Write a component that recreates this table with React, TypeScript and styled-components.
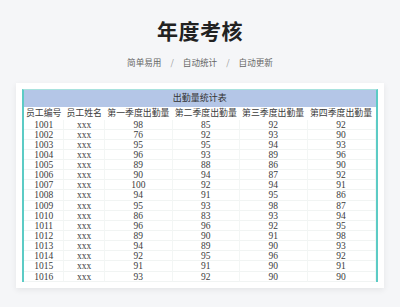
import React from "react";
import styled, { createGlobalStyle } from "styled-components";

const GlobalStyle = createGlobalStyle`
  html, body {
    margin: 0;
    padding: 0;
    background: #f5f6f8;
  }
  body {
    width: 400px;
    height: 307px;
    overflow: hidden;
    font-family: "Noto Sans CJK SC", "Noto Sans", sans-serif;
  }
`;

const Page = styled.div`
  display: flex;
  flex-direction: column;
  align-items: center;
  padding-top: 15px;
`;

const Title = styled.h1`
  margin: 0;
  font-size: 21px;
  line-height: 30px;
  font-weight: 700;
  color: #222;
  letter-spacing: 0.5px;
`;

const Tagline = styled.div`
  display: flex;
  align-items: center;
  gap: 9px;
  margin-top: 10px;
  font-size: 8.6px;
  line-height: 14px;
  color: #666;
`;

const Slash = styled.span`
  color: #999;
`;

const Card = styled.div`
  margin-top: 14px;
  width: 368px;
  box-sizing: border-box;
  padding: 6px 6.5px 6px 6px;
  background: #fff;
  box-shadow: 0 2px 6px rgba(0, 0, 0, 0.07);
`;

const Frame = styled.div`
  border-left: 2px solid #5ccbc5;
  border-right: 2px solid #5ccbc5;
  border-top: 1px solid #a8e2de;
  font-family: "Liberation Serif", "Noto Sans CJK SC", serif;
  color: #3c3c3c;
`;

const Banner = styled.div`
  height: 17px;
  line-height: 17px;
  background: #b4c6e7;
  text-align: center;
  font-size: 9px;
  color: #333;
`;

const Grid = styled.div`
  display: grid;
  grid-template-columns: 40.5fr 40.5fr 68fr 67fr 68fr 68fr;
`;

const Cell = styled.div<{ $head?: boolean }>`
  height: ${(p) => (p.$head ? "12.5px" : "10.15px")};
  line-height: ${(p) => (p.$head ? "13px" : "10.15px")};
  font-size: ${(p) => (p.$head ? "8.9px" : "9.5px")};
  text-align: center;
  white-space: nowrap;
  overflow: hidden;
  box-sizing: border-box;
  border-bottom: 1px solid ${(p) => (p.$head ? "transparent" : "#f1f4f3")};
  border-right: 1px solid ${(p) => (p.$head ? "transparent" : "#f3f6f5")};
`;

const heads = ["员工编号", "员工姓名", "第一季度出勤量", "第二季度出勤量", "第三季度出勤量", "第四季度出勤量"];

const rows: number[][] = [
  [1001, 98, 85, 92, 92],
  [1002, 76, 92, 93, 90],
  [1003, 95, 95, 94, 93],
  [1004, 96, 93, 89, 96],
  [1005, 89, 88, 86, 90],
  [1006, 90, 94, 87, 92],
  [1007, 100, 92, 94, 91],
  [1008, 94, 91, 95, 86],
  [1009, 95, 93, 98, 87],
  [1010, 86, 83, 93, 94],
  [1011, 96, 96, 92, 95],
  [1012, 89, 90, 91, 98],
  [1013, 94, 89, 90, 93],
  [1014, 92, 95, 96, 92],
  [1015, 91, 91, 90, 91],
  [1016, 93, 92, 90, 90],
];

const App = () => {
  return (
    <React.Fragment>
      <GlobalStyle />
      <Page>
        <Title>年度考核</Title>
        <Tagline>
          <span>简单易用</span>
          <Slash>/</Slash>
          <span>自动统计</span>
          <Slash>/</Slash>
          <span>自动更新</span>
        </Tagline>
        <Card>
          <Frame>
            <Banner>出勤量统计表</Banner>
            <Grid>
              {heads.map((h) => (
                <Cell $head key={h}>{h}</Cell>
              ))}
              {rows.map((r) => (
                <React.Fragment key={r[0]}>
                  <Cell>{r[0]}</Cell>
                  <Cell>xxx</Cell>
                  <Cell>{r[1]}</Cell>
                  <Cell>{r[2]}</Cell>
                  <Cell>{r[3]}</Cell>
                  <Cell>{r[4]}</Cell>
                </React.Fragment>
              ))}
            </Grid>
          </Frame>
        </Card>
      </Page>
    </React.Fragment>
  );
};

export default App;
